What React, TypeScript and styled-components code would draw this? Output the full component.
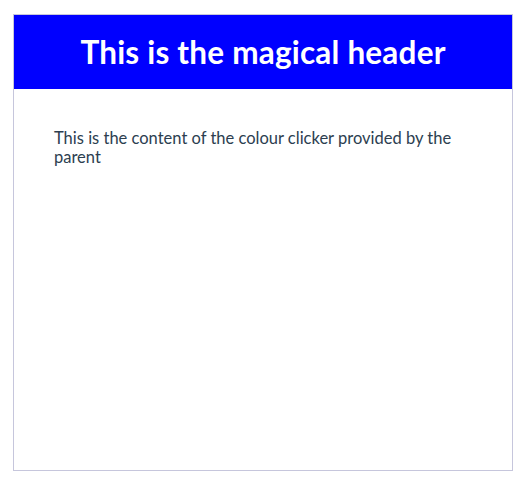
import React from "react";
import styled, { createGlobalStyle } from "styled-components";

const GlobalStyle = createGlobalStyle`
  html, body {
    margin: 0;
    padding: 0;
    background: #ffffff;
  }
  body {
    font-family: "Trebuchet MS", Lato, "DejaVu Sans", sans-serif;
    color: #2c3e50;
  }
`;

const Page = styled.div`
  padding: 14px 0 0 13px;
  display: flex;
  justify-content: flex-start;
`;

const Card = styled.section`
  box-sizing: border-box;
  width: 500px;
  height: 457px;
  border: 1px solid #c6c6dc;
  background: #ffffff;
  display: flex;
  flex-direction: column;
`;

const Header = styled.header`
  height: 74px;
  background: #0000ff;
  color: #ffffff;
  display: flex;
  align-items: center;
  justify-content: center;
`;

const Title = styled.h1`
  margin: 0;
  font-size: 31.5px;
  font-weight: 700;
  letter-spacing: 0.2px;
`;

const Content = styled.div`
  padding: 40px;
`;

const Text = styled.p`
  margin: 0;
  font-size: 16.5px;
  line-height: 19px;
`;

export default function App() {
  return (
    <>
      <GlobalStyle />
      <Page>
        <Card>
          <Header>
            <Title>This is the magical header</Title>
          </Header>
          <Content>
            <Text>
              This is the content of the colour clicker provided by the parent
            </Text>
          </Content>
        </Card>
      </Page>
    </>
  );
}
